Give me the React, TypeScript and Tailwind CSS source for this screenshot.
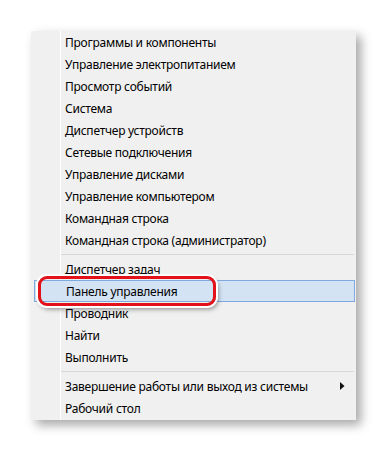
const groups: string[][] = [
  [
    "Программы и компоненты",
    "Управление электропитанием",
    "Просмотр событий",
    "Система",
    "Диспетчер устройств",
    "Сетевые подключения",
    "Управление дисками",
    "Управление компьютером",
    "Командная строка",
    "Командная строка (администратор)",
  ],
  ["Диспетчер задач", "Панель управления", "Проводник", "Найти", "Выполнить"],
  ["Завершение работы или выход из системы", "Рабочий стол"],
];

function Row({ label }: { label: string }) {
  const active = label === "Панель управления";
  const sub = label.startsWith("Завершение");

  if (active) {
    return (
      <div className="relative h-[22px] ml-[3px] mr-[1px] flex items-center pl-[31px] bg-[#d3e3f3] border border-[#7eaadf]">
        <span className="translate-y-px">{label}</span>
        {/* annotation ring */}
        <div className="absolute left-[3px] top-[-5px] w-[178px] h-[30px] rounded-[9px] border-[3px] border-[#e2111a] ring-2 ring-white shadow-[2px_3px_5px_rgba(0,0,0,0.45)]" />
      </div>
    );
  }

  return (
    <div className="h-[22px] flex items-center pl-[34px] pr-[11px]">
      <span className="flex-1 translate-y-px">{label}</span>
      {sub && (
        <svg width="5" height="8" viewBox="0 0 5 8">
          <path d="M0 0 L4.5 4 L0 8 Z" fill="#111" />
        </svg>
      )}
    </div>
  );
}

export default function App() {
  return (
    <div className="min-h-screen bg-white pt-[31px] pl-[31px]">
      <div
        className="relative w-[325px] bg-[#f0f0f0] text-[12px] tracking-[-0.25px] text-black pb-[1px] shadow-[5px_5px_10px_rgba(0,0,0,0.35)]"
        style={{ fontFamily: '"Noto Sans", "Open Sans", sans-serif' }}
      >
        <div className="absolute left-[29px] top-0 bottom-0 w-px bg-[#e2e3e3] border-r border-white" />
        {groups.map((items, gi) => (
          <div key={gi}>
            {gi > 0 && (
              <div className="h-[7px] flex items-center pl-[30px] pr-[2px]">
                <div className="h-px w-full bg-[#d7d7d7]" />
              </div>
            )}
            {items.map((label) => (
              <Row key={label} label={label} />
            ))}
          </div>
        ))}
      </div>
    </div>
  );
}
